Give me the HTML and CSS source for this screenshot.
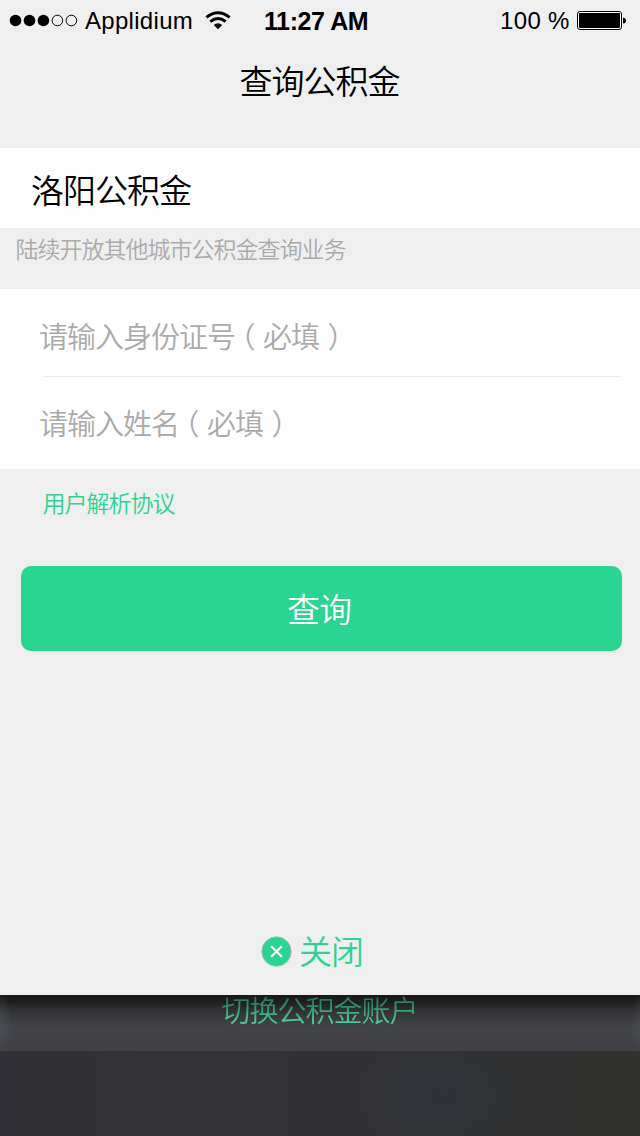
FILE: index.html
```html
<!DOCTYPE html>
<html lang="zh-CN">
<head>
<meta charset="utf-8">
<title>查询公积金</title>
<link rel="stylesheet" href="styles.css">
</head>
<body>
<div class="screen">
  <main class="panel">
    <header class="status">
      <svg class="signal" width="70" height="14" viewBox="0 0 70 14">
        <circle cx="7.5" cy="6.5" r="5.8"/><circle cx="21.5" cy="6.5" r="5.8"/><circle cx="35.4" cy="6.5" r="5.8"/>
        <g fill="none" stroke="#000" stroke-width="1"><circle cx="49.4" cy="6.5" r="5.3"/><circle cx="63.4" cy="6.5" r="5.3"/></g>
      </svg>
      <span class="carrier">Applidium</span>
      <svg class="wifi" width="26" height="19" viewBox="0 0 26 19">
        <path d="M13 18.2 8.8 14q4.2-3.6 8.4 0z"/>
        <g fill="none" stroke="#000" stroke-width="2.9"><path d="M1.4 6.4Q13-3 24.6 6.4M5.3 10.6q7.7-6.2 15.4 0"/></g>
      </svg>
      <span class="time">11:27 AM</span>
      <span class="percent">100 %</span>
      <svg class="battery" width="49" height="19" viewBox="0 0 49 19">
        <rect x=".5" y=".5" width="44" height="18" rx="2.5" fill="#fff" stroke="#000"/>
        <rect x="2" y="2" width="41" height="15" rx="1"/>
        <path d="M46 6.5q3 .5 3 3t-3 3z"/>
      </svg>
    </header>
    <h1 class="title">查询公积金</h1>
    <section class="city">洛阳公积金</section>
    <p class="hint">陆续开放其他城市公积金查询业务</p>
    <section class="form">
      <div class="field">请输入身份证号<span class="open">（</span>必填<span class="shut">）</span></div>
      <div class="field">请输入姓名<span class="open">（</span>必填<span class="shut">）</span></div>
    </section>
    <a class="agreement">用户解析协议</a>
    <button class="submit">查询</button>
    <div class="close">
      <svg width="32" height="32" viewBox="0 0 32 32">
        <circle cx="16.5" cy="16.5" r="14.7" fill="#2ad592" stroke="#b5b5b5" stroke-width="1"/>
        <path d="m11.2 11.2 10.6 10.6m0-10.6L11.2 21.8" fill="none" stroke="#fff" stroke-width="2.1"/>
      </svg>
      <span>关闭</span>
    </div>
  </main>
  <footer class="backdrop">
    <div class="switch"><span>切换公积金账户</span></div>
  </footer>
</div>
</body>
</html>
```
FILE: styles.css
```css
* { box-sizing: border-box; }
body { margin: 0; }
.screen {
  display: flex;
  flex-direction: column;
  width: 640px;
  height: 1136px;
  overflow: hidden;
  background: #323236;
  font-family: "Noto Sans CJK SC", sans-serif;
  font-weight: 350;
  color: #000;
}
.panel {
  display: flex;
  flex-direction: column;
  height: 995px;
  background: #efefef;
}
.status {
  display: flex;
  align-items: center;
  height: 41px;
  padding-left: 8px;
  font: 400 24px/28px "Liberation Sans", Arial, sans-serif;
  white-space: nowrap;
}
.signal { flex: none; }
.carrier { width: 108px; margin-left: 7px; letter-spacing: 0.3px; }
.wifi { flex: none; margin-left: 12px; }
.time { width: 106px; margin-left: 33px; font-size: 25px; font-weight: 700; letter-spacing: -0.4px; }
.percent { width: 69px; margin-left: 130px; letter-spacing: 0.35px; }
.battery { flex: none; margin-left: 8px; }
.title {
  height: 107px;
  margin: 0;
  padding: 20px 1px 0 0;
  font-size: 33px;
  font-weight: 350;
  letter-spacing: -1px;
  line-height: 38px;
  text-align: center;
}
.city {
  height: 80px;
  padding-left: 31px;
  background: #fff;
  font-size: 33px;
  letter-spacing: -1px;
  line-height: 82px;
}
.hint {
  height: 61px;
  margin: 0;
  padding-left: 15.5px;
  color: #aaa;
  font-size: 23px;
  letter-spacing: -1px;
  line-height: 40px;
}
.form { height: 180px; padding: 0 19px 0 39px; background: #fff; }
.field {
  height: 88px;
  color: #aaa;
  font-size: 29px;
  letter-spacing: -1px;
  line-height: 92px;
}
.field:first-child { background: linear-gradient(#ebebeb, #ebebeb) 4px bottom / 100% 1px no-repeat; }
.field + .field { line-height: 90px; }
.open, .shut { font-feature-settings: "halt"; }
.open { margin: 0 8.5px 0 6px; }
.shut { margin-left: 8.5px; }
.agreement {
  height: 97px;
  padding-left: 42.5px;
  color: #2ad592;
  font-size: 23px;
  letter-spacing: -1px;
  line-height: 67px;
}
.submit {
  height: 85px;
  margin: 0 18px 0 21px;
  padding: 0 5px 0 0;
  border: 0;
  border-radius: 10px;
  background: #2ad592;
  color: #fff;
  font-family: inherit;
  font-size: 33px;
  font-weight: 350;
  letter-spacing: -1px;
  line-height: 83px;
}
.close {
  display: flex;
  align-items: center;
  gap: 7px;
  margin-top: 276px;
  padding-left: 260px;
  color: #2ad592;
  font-size: 33px;
  letter-spacing: -1px;
  line-height: 46px;
}
.close svg { margin-top: 1px; }
.backdrop {
  height: 141px;
  background:
    radial-gradient(ellipse 90px 70px at 445px 100px, rgba(47, 50, 68, .3), transparent),
    linear-gradient(90deg, #323137, #323236 60%, #323230);
}
.switch {
  height: 56px;
  background:
    radial-gradient(ellipse 12px 36px at 0 30px, rgba(76, 84, 90, .6), transparent),
    radial-gradient(ellipse 8px 36px at 100% 30px, rgba(76, 82, 87, .4), transparent),
    linear-gradient(#161818 0, #202021 8px, #343437 17px, #424348 31px, #434448 38px, #403f44 56px);
  font-size: 29px;
  letter-spacing: -1px;
  line-height: 28px;
  text-align: center;
}
.switch span {
  padding-right: 1px;
  background: linear-gradient(#1f6a4c 6px, #2f8e67 18px, #46cc94 32px);
  background-clip: text;
  color: transparent;
}
```
